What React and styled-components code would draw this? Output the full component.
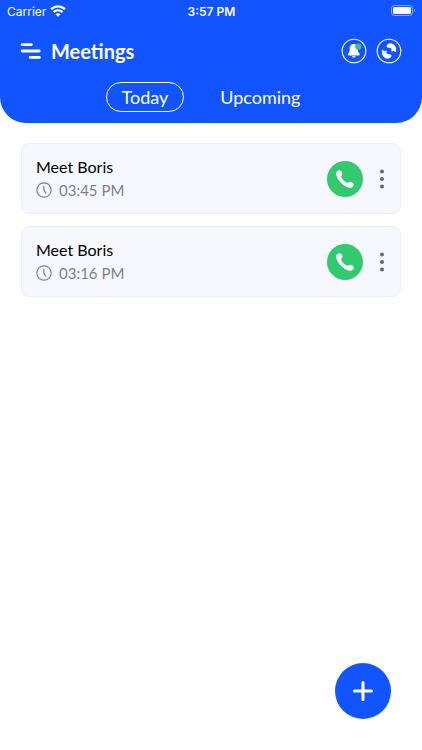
import React from "react";
import styled, { createGlobalStyle } from "styled-components";

const blue = "#1254ff";

const GlobalStyle = createGlobalStyle`
  *, *::before, *::after { box-sizing: border-box; }
  body { margin: 0; background: #fff; font-family: Lato, sans-serif; }
  button { font: inherit; color: inherit; margin: 0; padding: 0; border: 0; background: none; cursor: pointer; }
  h1, h2, p, ul { margin: 0; padding: 0; }
  svg { display: block; }
`;

const Screen = styled.div`
  min-height: 100vh;
  display: flex;
  flex-direction: column;
`;

const Header = styled.header`
  background: ${blue};
  color: #fff;
  border-radius: 0 0 26px 26px;
  padding-bottom: 11px;
`;

const StatusBar = styled.div`
  height: 22px;
  padding: 0 6px 0 7px;
  display: grid;
  grid-template-columns: 1fr auto 1fr;
  align-items: center;
  font-family: Inter, sans-serif;
  font-size: 12px;
`;

const Carrier = styled.span`
  display: flex;
  align-items: center;
  gap: 4px;
`;

const Clock = styled.time`
  font-weight: 600;
`;

const Battery = styled.span`
  justify-self: end;
`;

const TitleRow = styled.div`
  display: flex;
  align-items: center;
  height: 58px;
  padding: 0 20px;
`;

const Title = styled.h1`
  flex: 1;
  margin-left: 10px;
  font-size: 20px;
  line-height: 24px;
  font-weight: 700;
`;

const RoundButton = styled.button`
  width: 26px;
  height: 26px;
  margin-left: 9px;
`;

const Tabs = styled.nav`
  display: flex;
  justify-content: center;
  gap: 20px;
  margin-top: 2px;
`;

const Tab = styled.button`
  && {
    height: 30px;
    padding: 0 15px;
    border: 1px solid ${(p) => (p.$active ? "#fff" : "transparent")};
    border-radius: 15px;
    font-size: 18px;
    line-height: 24px;
  }
`;

const MeetingList = styled.ul`
  list-style: none;
  display: flex;
  flex-direction: column;
  gap: 12px;
  && { padding: 20px 21px; }
`;

const Card = styled.li`
  display: flex;
  align-items: center;
  min-height: 71px;
  padding: 11px 7px 11px 14px;
  background: #f7f8fd;
  border: 1px solid #eceff9;
  border-radius: 8px;
`;

const Details = styled.div`
  flex: 1;
`;

const MeetingName = styled.h2`
  font-size: 16px;
  line-height: 22px;
  font-weight: 400;
  color: #000;
`;

const MeetingTime = styled.p`
  display: flex;
  align-items: center;
  gap: 7px;
  font-size: 15px;
  line-height: 24px;
  color: #808085;
`;

const CallButton = styled.button`
  && {
    width: 36px;
    height: 36px;
    border-radius: 50%;
    background: #32c971;
    color: #fff;
    display: grid;
    place-items: center;
  }
`;

const MoreButton = styled.button`
  && {
    width: 22px;
    height: 36px;
    margin-left: 8px;
    color: #68696d;
    display: grid;
    place-items: center;
  }
`;

const AddButton = styled.button`
  && {
    position: fixed;
    right: 31px;
    bottom: 31px;
    width: 56px;
    height: 56px;
    border-radius: 50%;
    background: ${blue};
    color: #fff;
    display: grid;
    place-items: center;
  }
`;

const WifiIcon = () => (
  <svg width="16" height="12" viewBox="0 0 16 12" fill="none" stroke="#fff" strokeWidth="2.3" aria-hidden="true">
    <path d="M1 4.2C5 .4 11 .4 15 4.2" />
    <path d="M3.5 7.2C6.2 4.7 9.8 4.7 12.5 7.2" />
    <path d="M8 11.7 5.5 9.2c1.4-1.3 3.6-1.3 5 0Z" fill="#fff" stroke="none" />
  </svg>
);

const BatteryIcon = () => (
  <svg width="25" height="12" viewBox="0 0 25 12" aria-hidden="true">
    <rect x=".5" y=".5" width="21" height="10" rx="3" fill="none" stroke="#fff" strokeOpacity=".5" />
    <rect x="2" y="2" width="18" height="7" rx="1.5" fill="#fff" />
    <path d="M23 4c1.4.5 1.4 2.5 0 3Z" fill="#fff" fillOpacity=".5" />
  </svg>
);

const MenuIcon = () => (
  <svg width="21" height="18" viewBox="0 0 21 18" stroke="#fff" strokeWidth="2.8" strokeLinecap="round" aria-hidden="true">
    <path d="M2.2 2.6h9.2M2.2 9h17M10.2 15.4h9.2" />
  </svg>
);

const BellIcon = () => (
  <svg width="26" height="26" viewBox="0 0 26 26" aria-hidden="true">
    <circle cx="13" cy="13" r="11.8" fill="none" stroke="#fff" strokeWidth="1.1" />
    <path d="M12.6 6c-2.9 0-3.9 2.4-3.9 5 0 2.8-.6 3.7-1.5 4.5-.7.7-.4 2 .7 2h9.800c1.100 0 1.400-1.300.7-2-.9-.8-1.500-1.700-1.500-4.500 0-2.600-1.300-5-4.300-5Z" fill="#fff" />
    <path d="M10.8 18.3h4c-.4 1.6-3.6 1.6-4 0Z" fill="#fff" />
    <circle cx="17.3" cy="8.7" r="3.1" fill="#2fc58b" />
  </svg>
);

const swapArm =
  "M10.800 7.300C11.800 5.300 14.800 4.700 17 6c2 1.200 3.100 3.100 3.100 5.400v2.200c0 .6-.6.8-1 .4l-1.300-1.200-1.700.6c-.6.2-1.100-.3-.9-.9l.5-1.500c-.9-.9-2-1.200-3.300-1.200-1.300 0-2.200-1.300-1.600-2.500Z";

const SyncIcon = () => (
  <svg width="26" height="26" viewBox="0 0 26 26" fill="#fff" aria-hidden="true">
    <circle cx="13" cy="13" r="11.8" fill="none" stroke="#fff" strokeWidth="1.1" />
    <path d={swapArm} />
    <path d={swapArm} transform="rotate(180 13 13)" />
  </svg>
);

const ClockIcon = () => (
  <svg width="16" height="16" viewBox="0 0 16 16" fill="none" stroke="#808085" strokeWidth="1.2" strokeLinecap="round" aria-hidden="true">
    <circle cx="8" cy="8" r="7.2" />
    <path d="M7.9 4.2v4.2l2 2.8" />
  </svg>
);

const PhoneIcon = () => (
  <svg width="20" height="20" viewBox="0 0 20 20" fill="currentColor" aria-hidden="true">
    <path d="M2.4 1.9c1.4-1.1 3.2-.9 4.2.6.9 1.3 1.1 2.9.1 3.9-.6.6-.7 1.1-.3 1.9.9 2 2.9 4.1 5.2 5.3.8.4 1.3.3 1.9-.3 1-1 2.5-.8 3.8.1 1.6 1 1.9 2.7.8 4.1-1.1 1.4-2.9 1.7-4.8 1C7.9 16.500 3.300 11.900 1.400 6.400c-.6-1.800-.3-3.500 1-4.500Z" />
  </svg>
);

const DotsIcon = () => (
  <svg width="6" height="20" viewBox="0 0 6 20" fill="currentColor" aria-hidden="true">
    <circle cx="3" cy="2.5" r="2" />
    <circle cx="3" cy="10" r="2" />
    <circle cx="3" cy="17.5" r="2" />
  </svg>
);

const PlusIcon = () => (
  <svg width="22" height="22" viewBox="0 0 22 22" stroke="currentColor" strokeWidth="3" strokeLinecap="round" aria-hidden="true">
    <path d="M11 2.5v17M2.5 11h17" />
  </svg>
);

const meetings = [
  { name: "Meet Boris", time: "03:45 PM" },
  { name: "Meet Boris", time: "03:16 PM" },
];

export default function App() {
  return (
    <Screen>
      <GlobalStyle />
      <Header>
        <StatusBar>
          <Carrier>Carrier <WifiIcon /></Carrier>
          <Clock>3:57 PM</Clock>
          <Battery><BatteryIcon /></Battery>
        </StatusBar>
        <TitleRow>
          <button type="button" aria-label="Menu"><MenuIcon /></button>
          <Title>Meetings</Title>
          <RoundButton type="button" aria-label="Notifications"><BellIcon /></RoundButton>
          <RoundButton type="button" aria-label="Refresh"><SyncIcon /></RoundButton>
        </TitleRow>
        <Tabs>
          <Tab type="button" $active aria-pressed="true">Today</Tab>
          <Tab type="button" aria-pressed="false">Upcoming</Tab>
        </Tabs>
      </Header>
      <main>
        <MeetingList>
          {meetings.map((m) => (
            <Card key={m.time}>
              <Details>
                <MeetingName>{m.name}</MeetingName>
                <MeetingTime><ClockIcon />{m.time}</MeetingTime>
              </Details>
              <CallButton type="button" aria-label="Call"><PhoneIcon /></CallButton>
              <MoreButton type="button" aria-label="More options"><DotsIcon /></MoreButton>
            </Card>
          ))}
        </MeetingList>
      </main>
      <AddButton type="button" aria-label="Add meeting"><PlusIcon /></AddButton>
    </Screen>
  );
}
